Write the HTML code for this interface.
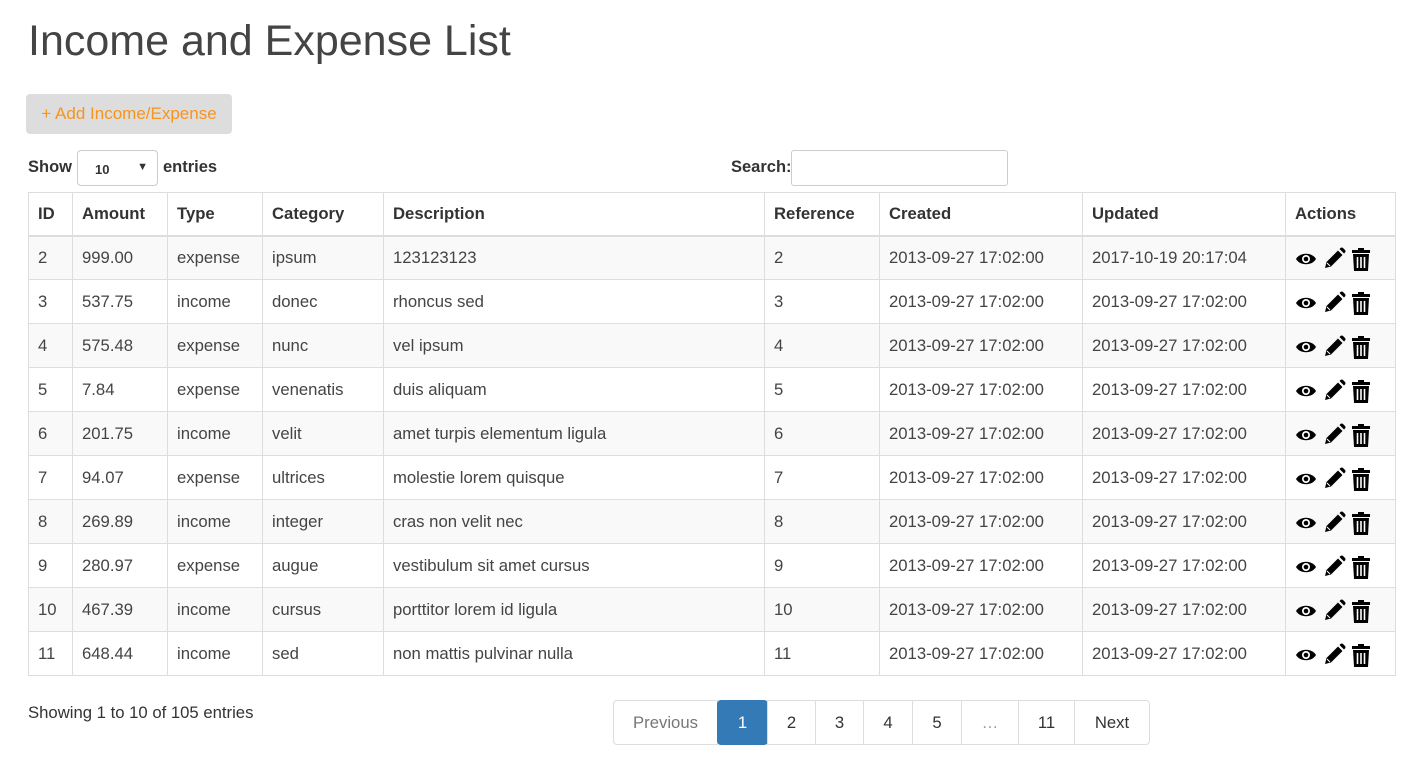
<!DOCTYPE html>
<html><head><meta charset="utf-8"><style>
*{box-sizing:border-box}
body{margin:0;background:#fff;font-family:"Liberation Sans",Arial,sans-serif;color:#333;width:1421px;height:779px;overflow:hidden;position:relative}
h1{position:absolute;left:28px;top:17px;margin:0;font-weight:normal;font-size:43px;color:#444}
.btn{position:absolute;left:26px;top:94px;width:206px;height:40px;background:#ddd;border-radius:4px;color:#f7941d;font-size:17px;line-height:40px;text-align:center}
.show{position:absolute;left:28px;top:158px;font-weight:bold;font-size:16.5px}
.sel{position:absolute;left:77px;top:150px;width:81px;height:36px;border:1px solid #ccc;border-radius:4px;font-size:13px;font-weight:bold;padding:11px 0 0 17px}
.sel span{position:absolute;right:9px;top:10px;font-size:11px}
.entries{position:absolute;left:163px;top:158px;font-weight:bold;font-size:16.5px}
.search{position:absolute;left:731px;top:158px;font-weight:bold;font-size:16.5px}
.sbox{position:absolute;left:791px;top:150px;width:217px;height:36px;border:1px solid #ccc;border-radius:3px}
table{position:absolute;left:28px;top:192px;border-collapse:collapse;table-layout:fixed;width:1367px;font-size:16.7px}
td,th{border:1px solid #ddd;padding:0 9px;text-align:left;height:44px;white-space:nowrap}
th{height:43px;border-bottom:2px solid #ddd;font-weight:bold}
tbody tr:nth-child(odd){background:#f9f9f9}
td{color:#444}
.ic{display:flex;gap:5px;align-items:center;padding-top:3px}
.info{position:absolute;left:28px;top:703px;font-size:16.7px}
.pg{position:absolute;left:614px;top:700px;display:flex;height:45px}
.pg div{border:1px solid #ddd;margin-left:-1px;line-height:43px;text-align:center;font-size:16.7px;color:#333}
.pg div:first-child{border-radius:4px 0 0 4px;color:#777}
.pg div:last-child{border-radius:0 4px 4px 0}
.pg .a{background:#337ab7;border-color:#337ab7;color:#fff;border-radius:4px}
</style></head><body>
<h1>Income and Expense List</h1>
<div class="btn">+ Add Income/Expense</div>
<div class="show">Show</div><div class="sel">10<span>▼</span></div><div class="entries">entries</div>
<div class="search">Search:</div><div class="sbox"></div>
<table>
<colgroup><col style="width:44px"><col style="width:95px"><col style="width:95px"><col style="width:121px"><col style="width:381px"><col style="width:115px"><col style="width:203px"><col style="width:203px"><col style="width:110px"></colgroup>
<thead><tr><th>ID</th><th>Amount</th><th>Type</th><th>Category</th><th>Description</th><th>Reference</th><th>Created</th><th>Updated</th><th>Actions</th></tr></thead>
<tbody id="tb"></tbody></table>
<div class="info">Showing 1 to 10 of 105 entries</div>
<div class="pg"><div style="width:105px">Previous</div><div class="a" style="width:51px">1</div><div style="width:49px">2</div><div style="width:49px">3</div><div style="width:50px">4</div><div style="width:50px">5</div><div style="width:58px;color:#999">…</div><div style="width:57px">11</div><div style="width:76px">Next</div></div>
<script>
var rows=[[2,"999.00","expense","ipsum","123123123","2017-10-19 20:17:04"],[3,"537.75","income","donec","rhoncus sed"],[4,"575.48","expense","nunc","vel ipsum"],[5,"7.84","expense","venenatis","duis aliquam"],[6,"201.75","income","velit","amet turpis elementum ligula"],[7,"94.07","expense","ultrices","molestie lorem quisque"],[8,"269.89","income","integer","cras non velit nec"],[9,"280.97","expense","augue","vestibulum sit amet cursus"],[10,"467.39","income","cursus","porttitor lorem id ligula"],[11,"648.44","income","sed","non mattis pulvinar nulla"]];
var icons='<div class="ic"><svg width="22" height="14" viewBox="0 0 22 14"><path d="M1 7C5 0 17 0 21 7C17 14 5 14 1 7Z" fill="#000"/><circle cx="11" cy="7" r="4" fill="#fff"/><circle cx="11" cy="7" r="2.3" fill="#000"/></svg><svg width="24" height="24" viewBox="0 0 24 24"><path d="M3 21l1.5-6L16 3.5l4.5 4.5L9 19.5z M17.5 2l4.5 4.5 1-1a2 2 0 0 0 0-2.5L21 1a2 2 0 0 0-2.5 0z" fill="#000"/><path d="M5 16l3 3" stroke="#fff" stroke-width="1"/></svg><svg width="20" height="24" viewBox="0 0 20 24"><path d="M7 1h6v2h6v3H1V3h6z" fill="#000"/><path d="M2 7h16l-1 17H3z" fill="#000"/><path d="M6.5 10v11M10 10v11M13.5 10v11" stroke="#fff" stroke-width="1.6"/></svg></div>';
var h="";rows.forEach(function(r){h+="<tr><td>"+r[0]+"</td><td>"+r[1]+"</td><td>"+r[2]+"</td><td>"+r[3]+"</td><td>"+r[4]+"</td><td>"+r[0]+"</td><td>2013-09-27 17:02:00</td><td>"+(r[5]||"2013-09-27 17:02:00")+"</td><td>"+icons+"</td></tr>"});
document.getElementById("tb").innerHTML=h;
</script>
</body></html>
